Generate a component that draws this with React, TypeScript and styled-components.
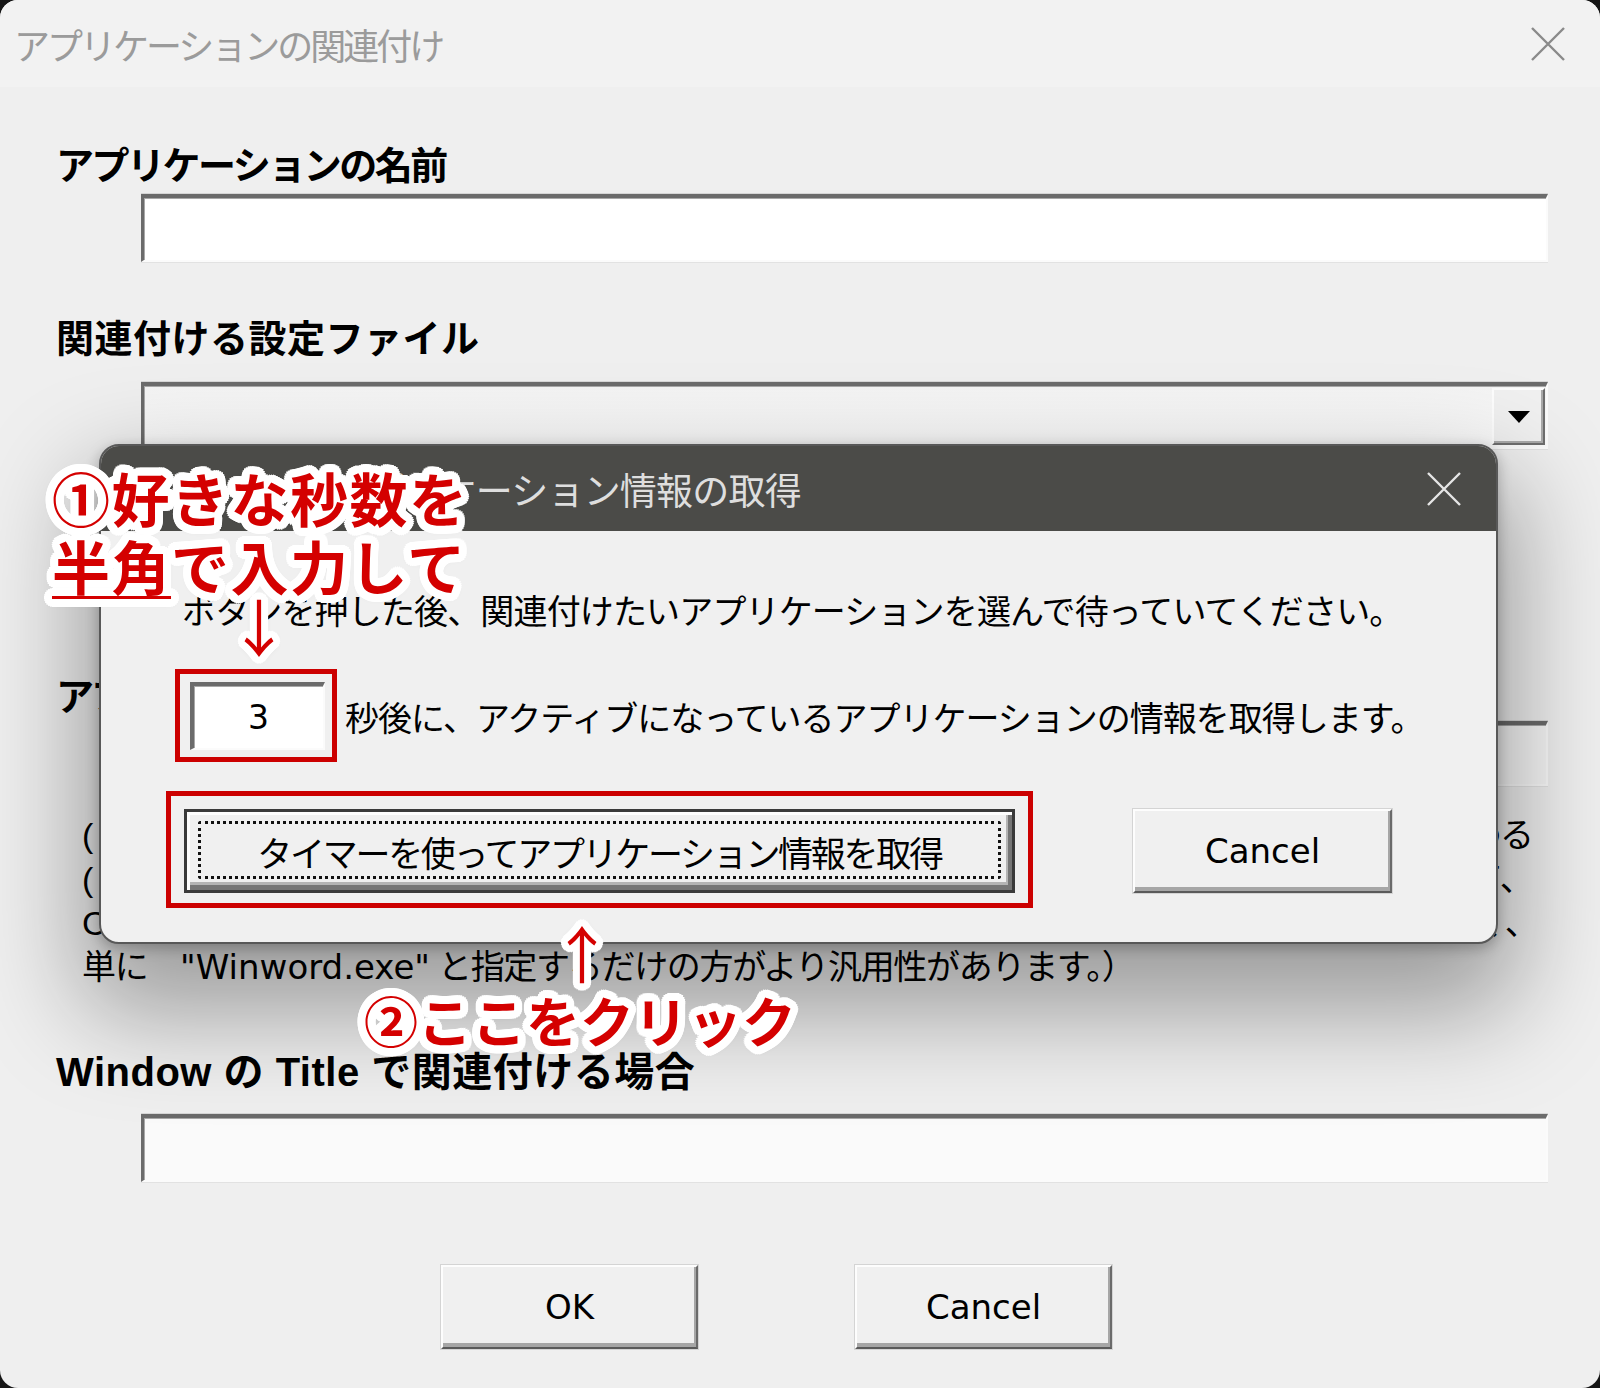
import React from 'react';
import styled, { createGlobalStyle } from 'styled-components';

const UI_FONT = `"Liberation Sans", "Noto Sans CJK JP", sans-serif`;
const LATIN_UI = `"DejaVu Sans", "Noto Sans CJK JP", sans-serif`;
const MARK_FONT = `"Noto Sans CJK JP", sans-serif`;

// white halo round the red callout text
const halo = (r: number) => {
  const out: string[] = [];
  [r, r * 0.55].forEach((rad) => {
    for (let i = 0; i < 24; i++) {
      const a = (i / 24) * Math.PI * 2;
      out.push(`${(Math.cos(a) * rad).toFixed(1)}px ${(Math.sin(a) * rad).toFixed(1)}px 0 #fff`);
    }
  });
  out.push('0 1px 8px rgba(0,0,0,0.35)');
  return out.join(', ');
};

const GlobalStyle = createGlobalStyle`
  html, body {
    margin: 0;
    padding: 0;
    background: #151515;
  }
  body {
    width: 1600px;
    height: 1388px;
    overflow: hidden;
  }
`;

const Window = styled.div`
  position: relative;
  width: 1600px;
  height: 1388px;
  border-radius: 18px;
  overflow: hidden;
  background: #efefef;
  font-family: ${UI_FONT};
  color: #000;
`;

const TitleBar = styled.header`
  height: 87px;
  box-sizing: border-box;
  display: flex;
  align-items: center;
  justify-content: space-between;
  padding: 0 34px 0 14px;
  background: #f2f2f2;
`;

const WindowTitle = styled.div`
  font-size: 36px;
  letter-spacing: -3px;
  color: #9b9b9b;
  white-space: nowrap;
`;

const CloseIcon = ({ color, size }: { color: string; size: number }) => (
  <svg width={size} height={size} viewBox="0 0 36 36">
    <path d="M2 2 L34 34 M34 2 L2 34" stroke={color} strokeWidth="2.4" fill="none" />
  </svg>
);

const Body = styled.main`
  display: flex;
  flex-direction: column;
  padding: 0 52px 0 56px;
`;

const Label = styled.div<{ $top: number; $ls?: number; $size?: number }>`
  margin-top: ${(p) => p.$top}px;
  height: 44px;
  line-height: 44px;
  font-size: ${(p) => p.$size ?? 38}px;
  font-weight: 700;
  letter-spacing: ${(p) => p.$ls ?? -2.5}px;
  white-space: nowrap;
`;

const Field = styled.div<{ $top: number; $height: number; $bg?: string }>`
  margin-top: ${(p) => p.$top}px;
  margin-left: 85px;
  height: ${(p) => p.$height}px;
  box-sizing: border-box;
  border-style: solid;
  border-width: 4px 2px 2px 3px;
  border-color: #6b6b6b #fbfbfb #fbfbfb #6b6b6b;
  background: ${(p) => p.$bg ?? '#fff'};
  box-shadow: inset 1px 1px 0 #a8a8a8, 0 -1px 0 #d6d6d6, 0 1px 0 #e2e2e2;
`;

const Combo = styled(Field)`
  display: flex;
  justify-content: flex-end;
  padding: 2px 1px 2px 0;
`;

const DropButton = styled.div`
  width: 53px;
  box-sizing: border-box;
  display: flex;
  align-items: center;
  justify-content: center;
  background: #f0f0f0;
  border: 2px solid;
  border-color: #fdfdfd #6e6e6e #6e6e6e #fdfdfd;
  box-shadow: inset -2px -2px 0 #a9a9a9;

  &::after {
    content: '';
    border-left: 11px solid transparent;
    border-right: 11px solid transparent;
    border-top: 12px solid #000;
  }
`;

const Notes = styled.div`
  margin-top: 27px;
  margin-left: 26px;
  width: 1466px;
  overflow: hidden;
  font-size: 34px;
  letter-spacing: -1.3px;
  line-height: 44px;
`;

const NoteLine = styled.div`
  white-space: nowrap;
`;

const Paren = styled.span`
  display: inline-block;
  width: 18px;
`;

const Quoted = styled.span`
  font-family: ${LATIN_UI};
  letter-spacing: 0;
  margin-right: 8px;
`;

const ButtonRow = styled.div<{ $top: number; $left: number; $gap: number }>`
  display: flex;
  margin-top: ${(p) => p.$top}px;
  padding-left: ${(p) => p.$left}px;
  gap: ${(p) => p.$gap}px;
`;

const PushButton = styled.div<{ $width: number; $default?: boolean }>`
  position: relative;
  width: ${(p) => p.$width}px;
  height: 84px;
  box-sizing: border-box;
  display: flex;
  align-items: center;
  justify-content: center;
  background: #f0f0f0;
  font-family: ${LATIN_UI};
  font-size: 34px;
  white-space: nowrap;
  border: ${(p) => (p.$default ? '3px solid #3a3a3a' : '2px solid')};
  border-color: ${(p) => (p.$default ? '#3a3a3a' : '#fdfdfd #6a6a6a #5a5a5a #fdfdfd')};
  box-shadow: ${(p) =>
    p.$default
      ? 'inset 3px 3px 0 #fdfdfd, inset -4px -5px 0 #767676, inset -6px -8px 0 #b4b4b4'
      : 'inset -2px -4px 0 #a6a6a6, 0 0 0 1px #d4d4d4'};
`;

const FocusRing = styled.div`
  position: absolute;
  inset: 9px 11px 11px 11px;
  border: 3px dotted #111;
  border-radius: 3px;
`;

const JpText = styled.span`
  font-family: ${UI_FONT};
  font-size: 35px;
  letter-spacing: -2.3px;
  position: relative;
`;

/* ---- timer dialog ---- */

const Dialog = styled.section`
  position: absolute;
  left: 99px;
  top: 444px;
  width: 1399px;
  height: 500px;
  box-sizing: border-box;
  display: flex;
  flex-direction: column;
  border: 2px solid #585858;
  border-radius: 20px;
  overflow: hidden;
  background: #f0f0f0;
  box-shadow: 0 50px 100px 20px rgba(0, 0, 0, 0.34), 0 4px 14px rgba(0, 0, 0, 0.25);
`;

const DialogTitleBar = styled.header`
  height: 85px;
  flex: none;
  display: flex;
  align-items: center;
  justify-content: space-between;
  padding: 0 34px 0 230px;
  background: #4b4b48;
`;

const DialogTitle = styled.div`
  font-size: 37px;
  letter-spacing: -0.8px;
  color: #dedede;
  white-space: nowrap;
`;

const DialogBody = styled.div`
  display: flex;
  flex-direction: column;
  padding: 0 0 0 81px;
`;

const DialogLine = styled.div<{ $top: number }>`
  margin-top: ${(p) => p.$top}px;
  font-size: 34px;
  letter-spacing: -0.85px;
  line-height: 44px;
  white-space: nowrap;
`;

const TimerRow = styled.div`
  display: flex;
  align-items: center;
  gap: 20px;
  margin-top: 48px;
  margin-left: 8px;
`;

const SecondsBox = styled.div`
  width: 135px;
  height: 68px;
  box-sizing: border-box;
  display: flex;
  align-items: center;
  justify-content: center;
  background: #fff;
  border-style: solid;
  border-width: 4px 2px 2px 4px;
  border-color: #6b6b6b #fbfbfb #fbfbfb #6b6b6b;
  box-shadow: inset 1px 1px 0 #a8a8a8;
  font-family: ${LATIN_UI};
  font-size: 33px;
`;

const TimerText = styled.span`
  font-size: 34px;
  letter-spacing: -1px;
  white-space: nowrap;
`;

/* ---- red annotations ---- */

const Callout = styled.div<{ $left: number; $top: number; $size: number; $lh: number; $ls?: number }>`
  position: absolute;
  left: ${(p) => p.$left}px;
  top: ${(p) => p.$top}px;
  font-family: ${MARK_FONT};
  font-weight: 700;
  font-size: ${(p) => p.$size}px;
  line-height: ${(p) => p.$lh}px;
  letter-spacing: ${(p) => p.$ls ?? 0}px;
  color: #d40000;
  white-space: nowrap;
  text-shadow: ${halo(8)};
`;

const Underlined = styled.span`
  text-decoration: underline;
  text-decoration-thickness: 3px;
  text-underline-offset: 6px;
`;

const Arrow = styled.div<{ $left: number; $top: number }>`
  position: absolute;
  left: ${(p) => p.$left}px;
  top: ${(p) => p.$top}px;
  font-family: ${MARK_FONT};
  font-size: 62px;
  line-height: 62px;
  color: #d40000;
  text-shadow: ${halo(7)};
`;

const RedFrame = styled.div<{ $left: number; $top: number; $w: number; $h: number }>`
  position: absolute;
  left: ${(p) => p.$left}px;
  top: ${(p) => p.$top}px;
  width: ${(p) => p.$w}px;
  height: ${(p) => p.$h}px;
  box-sizing: border-box;
  border: 5px solid #cc0000;
`;

export default function App() {
  return (
    <>
      <GlobalStyle />
      <Window>
        <TitleBar>
          <WindowTitle>アプリケーションの関連付け</WindowTitle>
          <CloseIcon color="#8a8a8a" size={36} />
        </TitleBar>

        <Body>
          <Label $top={57}>アプリケーションの名前</Label>
          <Field $top={6} $height={68} />

          <Label $top={55} $ls={0.5}>関連付ける設定ファイル</Label>
          <Combo $top={21} $height={67} $bg="linear-gradient(#f4f4f4, #fafafa)">
            <DropButton />
          </Combo>

          <Label $top={226}>アプリケーションの実行ファイル名で関連付ける場合</Label>
          <Field $top={2} $height={65} $bg="#f7f7f7" />

          <Notes>
            <NoteLine>
              <Paren>(</Paren>実行ファイル名はフルパスで指定することもできますが、インストール先によってはパスが変わる
            </NoteLine>
            <NoteLine>
              <Paren>(</Paren>例えば、ワードの実行ファイルの場所は、オフィスのバージョンやインストールの方法によって、
            </NoteLine>
            <NoteLine>C:\Program Files\Microsoft Office\Office16\WINWORD.EXE のように変わるため、フルパスではなく、</NoteLine>
            <NoteLine>
              単に　<Quoted>"Winword.exe"</Quoted>と指定するだけの方がより汎用性があります。）
            </NoteLine>
          </Notes>

          <Label $top={61} $size={40} $ls={0.5}>Window の Title で関連付ける場合</Label>
          <Field $top={20} $height={68} $bg="#fafafa" />

          <ButtonRow $top={83} $left={385} $gap={157}>
            <PushButton $width={257}>OK</PushButton>
            <PushButton $width={257}>Cancel</PushButton>
          </ButtonRow>
        </Body>

        <Dialog>
          <DialogTitleBar>
            <DialogTitle>アプリケーション情報の取得</DialogTitle>
            <CloseIcon color="#e6e6e6" size={36} />
          </DialogTitleBar>
          <DialogBody>
            <DialogLine $top={59}>ボタンを押した後、関連付けたいアプリケーションを選んで待っていてください。</DialogLine>
            <TimerRow>
              <SecondsBox>3</SecondsBox>
              <TimerText>秒後に、アクティブになっているアプリケーションの情報を取得します。</TimerText>
            </TimerRow>
            <ButtonRow $top={59} $left={2} $gap={118}>
              <PushButton $width={831} $default>
                <FocusRing />
                <JpText>タイマーを使ってアプリケーション情報を取得</JpText>
              </PushButton>
              <PushButton $width={259}>Cancel</PushButton>
            </ButtonRow>
          </DialogBody>
        </Dialog>

        <RedFrame $left={175} $top={669} $w={162} $h={93} />
        <RedFrame $left={166} $top={791} $w={867} $h={117} />

        <Callout $left={52} $top={463} $size={58} $lh={68} $ls={1.5}>
          <div>①好きな秒数を</div>
          <div>
            <Underlined>半角</Underlined>で入力して
          </div>
        </Callout>
        <Arrow $left={228} $top={594}>↓</Arrow>

        <Arrow $left={551} $top={921}>↑</Arrow>
        <Callout $left={364} $top={988} $size={54} $lh={64}>
          ②ここをクリック
        </Callout>
      </Window>
    </>
  );
}
